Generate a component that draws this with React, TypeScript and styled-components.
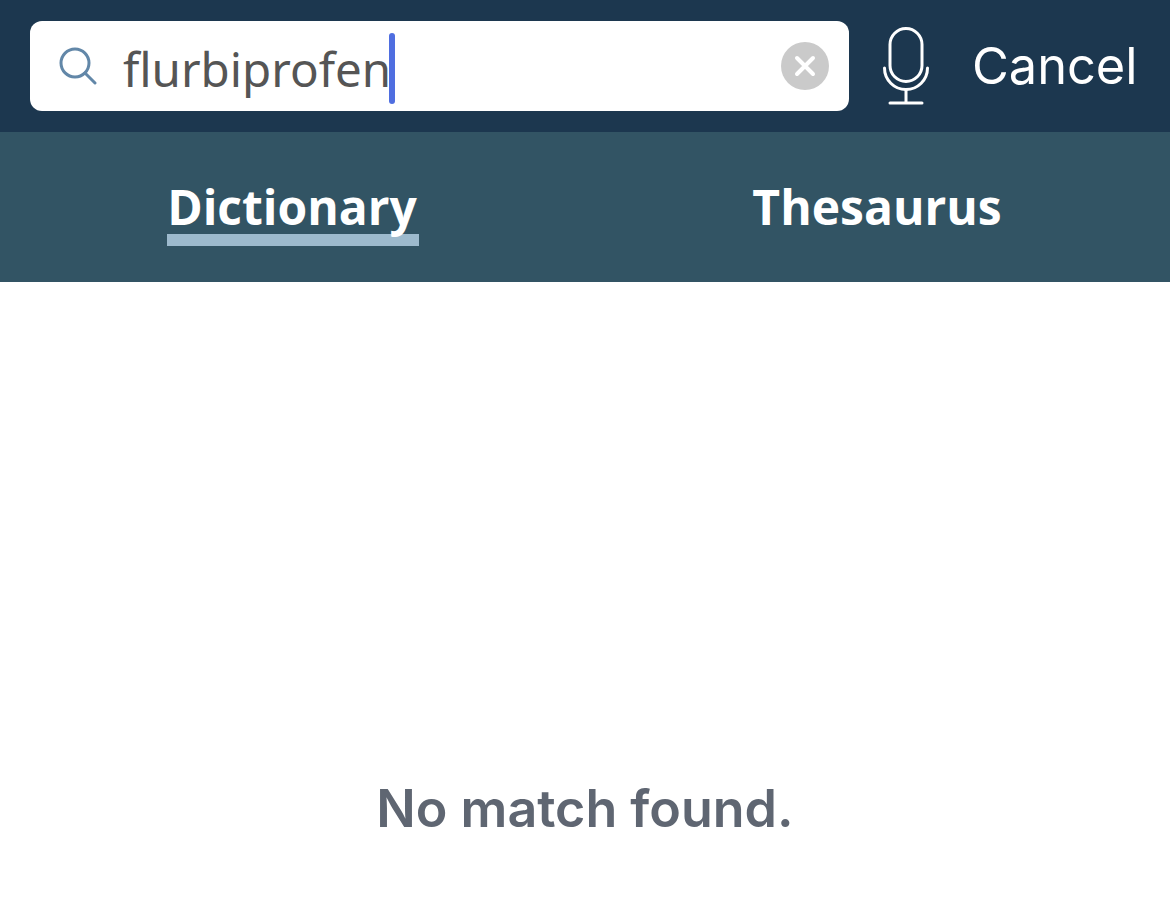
import React from "react";
import styled, { createGlobalStyle } from "styled-components";

const GlobalStyle = createGlobalStyle`
    html, body {
        margin: 0;
        padding: 0;
        background: #ffffff;
    }
`;

const Page = styled.div`
    width: 1170px;
    height: 900px;
    display: flex;
    flex-direction: column;
    overflow: hidden;
    background: #ffffff;
`;

// Top bar with the search field
const SearchBar = styled.header`
    height: 132px;
    box-sizing: border-box;
    padding: 21px 32.5px 21px 30px;
    display: flex;
    align-items: center;
    background: #1c374f;
`;

const SearchField = styled.div`
    width: 819px;
    height: 90px;
    box-sizing: border-box;
    padding: 0 20px 0 29px;
    display: flex;
    align-items: center;
    background: #ffffff;
    border-radius: 12px;
`;

const SearchText = styled.span`
    margin-left: 26px;
    padding-top: 6px;
    font-family: "Noto Sans", sans-serif;
    font-size: 47.5px;
    color: #555555;
    line-height: 84px;
`;

const Caret = styled.span`
    width: 6px;
    height: 71px;
    margin: 4px 0 0 -2px;
    border-radius: 3px;
    background: #4f6ee0;
`;

const ClearButton = styled.span`
    width: 48px;
    height: 48px;
    margin-left: auto;
    display: flex;
    align-items: center;
    justify-content: center;
    border-radius: 50%;
    background: #cacaca;
`;

const MicWrap = styled.span`
    margin-left: 34px;
    display: flex;
`;

const CancelLabel = styled.span`
    margin-left: auto;
    margin-bottom: 2px;
    font-family: Inter, sans-serif;
    font-size: 50.5px;
    color: #ffffff;
`;

const TabBar = styled.nav`
    height: 150px;
    display: grid;
    grid-template-columns: 586px 582px;
    background: #325464;
`;

const Tab = styled.div`
    padding-top: 12px;
    display: flex;
    align-items: center;
    justify-content: center;
`;

const TabLabel = styled.span<{ $active?: boolean }>`
    padding-right: ${(p) => (p.$active ? "2px" : "0")};
    font-family: "Open Sans", sans-serif;
    font-weight: 700;
    font-size: 48px;
    line-height: 54px;
    color: #ffffff;
    border-bottom: 12px solid ${(p) => (p.$active ? "#9dbacd" : "transparent")};
`;

const Results = styled.main`
    flex: 1;
    padding-top: 496px;
    text-align: center;
    font-family: Inter, sans-serif;
    font-weight: 600;
    font-size: 52px;
    line-height: 62px;
    color: #5f6672;
`;

const SearchIcon = () => (
    <svg width="38" height="38" viewBox="0 0 38 38" fill="none" stroke="#6287a8" strokeWidth="3" strokeLinecap="round">
        <circle cx="16" cy="16" r="14" />
        <path d="M26 26 L36 36" />
    </svg>
);

const ClearIcon = () => (
    <svg width="22" height="22" viewBox="0 0 22 22" fill="none" stroke="#ffffff" strokeWidth="4" strokeLinecap="round">
        <path d="M3 3 L19 19 M19 3 L3 19" />
    </svg>
);

const MicIcon = () => (
    <svg width="46" height="78" viewBox="0 0 46 78" fill="none" stroke="#ffffff" strokeWidth="3" strokeLinecap="round">
        <rect x="7" y="1.5" width="32" height="53" rx="16" />
        <path d="M1.5 41 A21.5 21.5 0 0 0 44.5 41" />
        <path d="M23 62.5 V76 M7 76 H39" />
    </svg>
);

export default function App() {
    return (
        <Page>
            <GlobalStyle />
            <SearchBar>
                <SearchField>
                    <SearchIcon />
                    <SearchText>flurbiprofen</SearchText>
                    <Caret />
                    <ClearButton>
                        <ClearIcon />
                    </ClearButton>
                </SearchField>
                <MicWrap>
                    <MicIcon />
                </MicWrap>
                <CancelLabel>Cancel</CancelLabel>
            </SearchBar>
            <TabBar>
                <Tab>
                    <TabLabel $active>Dictionary</TabLabel>
                </Tab>
                <Tab>
                    <TabLabel>Thesaurus</TabLabel>
                </Tab>
            </TabBar>
            <Results>No match found.</Results>
        </Page>
    );
}
